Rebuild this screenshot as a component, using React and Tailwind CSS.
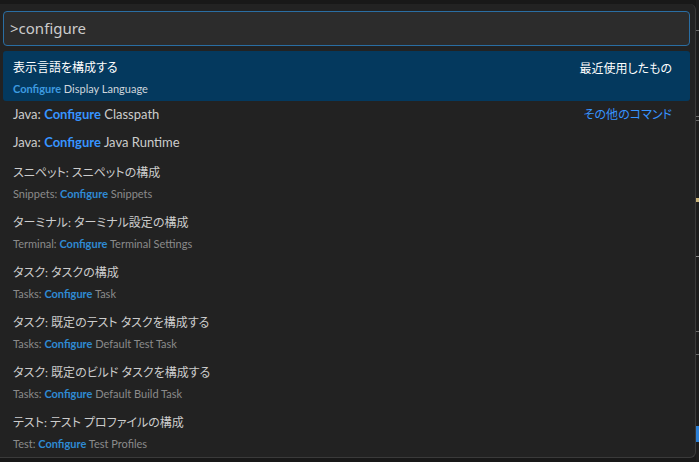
import React from 'react';

const uiFont = { fontFamily: 'Lato, "Noto Sans CJK JP", sans-serif' };
const inputFont = { fontFamily: '"Noto Sans", "Noto Sans CJK JP", sans-serif' };

const items = [
  { id: 'lang', label: '表示言語を構成する', detail: ['', 'Configure', ' Display Language'], tag: '最近使用したもの', selected: true },
  { id: 'cp', single: ['Java: ', 'Configure', ' Classpath'], tag: 'その他のコマンド', h: 'h-[28px]' },
  { id: 'rt', single: ['Java: ', 'Configure', ' Java Runtime'], h: 'h-[27px]' },
  { id: 'snip', label: 'スニペット: スニペットの構成', detail: ['Snippets: ', 'Configure', ' Snippets'] },
  { id: 'term', label: 'ターミナル: ターミナル設定の構成', detail: ['Terminal: ', 'Configure', ' Terminal Settings'] },
  { id: 'task', label: 'タスク: タスクの構成', detail: ['Tasks: ', 'Configure', ' Task'] },
  { id: 'test', label: 'タスク: 既定のテスト タスクを構成する', detail: ['Tasks: ', 'Configure', ' Default Test Task'] },
  { id: 'build', label: 'タスク: 既定のビルド タスクを構成する', detail: ['Tasks: ', 'Configure', ' Default Build Task'] },
  { id: 'prof', label: 'テスト: テスト プロファイルの構成', detail: ['Test: ', 'Configure', ' Test Profiles'] },
];

function Row({ item }) {
  if (item.single) {
    return (
      <div className={`flex items-center justify-between pl-[10px] pr-[18px] text-[13px] text-[#cccccc] ${item.h}`}>
        <span>
          {item.single[0]}
          <span className="font-bold text-[#3794ff]">{item.single[1]}</span>
          {item.single[2]}
        </span>
        {item.tag && (
          <span className="text-[12px] text-[#3794ff] [font-feature-settings:'palt']">{item.tag}</span>
        )}
      </div>
    );
  }
  const sel = item.selected;
  return (
    <div
      className={`flex h-[50px] items-start justify-between pl-[10px] pr-[18px] ${sel ? 'rounded-[3px] bg-[#04395e]' : ''}`}
    >
      <div className="flex flex-col pt-[6px]">
        <div
          className={`h-[22px] text-[12px] leading-[22px] [font-feature-settings:'palt'] ${sel ? 'text-white' : 'text-[#cccccc]'}`}
        >
          {item.label}
        </div>
        <div className={`h-[20px] text-[11px] leading-[20px] ${sel ? 'text-[#cfd6dc]' : 'text-[#8b8b8b]'}`}>
          {item.detail[0]}
          <span className={`font-bold ${sel ? 'text-[#3d9be0]' : 'text-[#2f8ad3]'}`}>{item.detail[1]}</span>
          {item.detail[2]}
        </div>
      </div>
      {item.tag && (
        <span className="pt-[7px] text-[12px] leading-[22px] text-white [font-feature-settings:'palt']">
          {item.tag}
        </span>
      )}
    </div>
  );
}

export default function App() {
  return (
    <div className="flex h-[462px] w-[699px] overflow-hidden bg-[#181818]" style={uiFont}>
      <div className="mt-[4px] flex h-[454px] w-[696px] flex-col rounded-r-[6px] border-r border-b border-[#3a3a3a] bg-[#222222] pl-[3px] pr-[5px] pt-[7px]">
        <div
          className="flex h-[35px] items-center rounded-[4px] border border-[#2a6ea3] bg-[#2c2c2c] pl-[6px] text-[15px] text-[#cccccc]"
          style={inputFont}
        >
          &gt;configure
        </div>
        <div className="mt-[5px] flex flex-col">
          {items.map((it) => (
            <Row key={it.id} item={it} />
          ))}
        </div>
      </div>
      {/* slice of the editor's overview ruler behind the palette */}
      <div className="flex w-[3px] flex-col bg-[#1c1c1c]">
        <div className="mt-[30px] h-px bg-[#6a6a6a]" />
        <div className="mt-[85px] h-px bg-[#6a6a6a]" />
        <div className="mt-[3px] h-px bg-[#6a6a6a]" />
        <div className="mt-[77px] h-[4px] bg-[#c8b37a]" />
        <div className="mt-[54px] h-px bg-[#8a8a8a]" />
        <div className="mt-[74px] h-px bg-[#6a6a6a]" />
        <div className="mt-[22px] h-px bg-[#6a6a6a]" />
        <div className="mt-[71px] h-[16px] bg-[#2b7fd6]" />
      </div>
    </div>
  );
}
